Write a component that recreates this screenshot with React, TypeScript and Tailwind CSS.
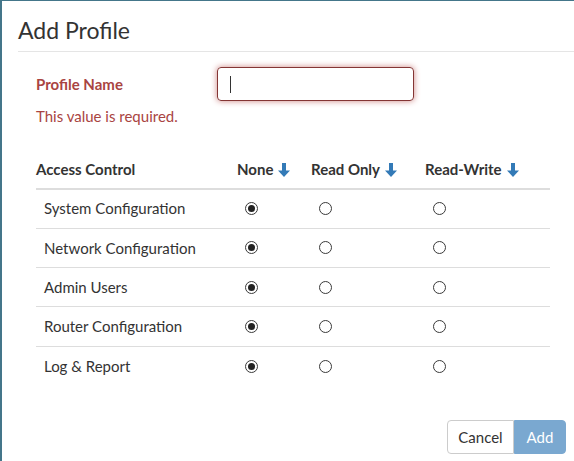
import React from "react";

const rows = [
  "System Configuration",
  "Network Configuration",
  "Admin Users",
  "Router Configuration",
  "Log & Report",
];

function Arrow() {
  return (
    <svg width="12" height="14" viewBox="0 0 12 14" className="ml-[5px] inline-block">
      <path d="M4 0h4v7.5h4L6 14 0 7.5h4z" fill="#337ab7" />
    </svg>
  );
}

function Radio({ checked }: { checked?: boolean }) {
  return (
    <span className="w-[13px] h-[13px] rounded-full border border-[#3a3a3a] bg-white flex items-center justify-center">
      {checked && <span className="w-[7px] h-[7px] rounded-full bg-[#222]" />}
    </span>
  );
}

export default function App() {
  return (
    <div
      className="w-[574px] h-[461px] border-l-2 border-t border-[#44768a] bg-white text-[#333] overflow-hidden"
      style={{ fontFamily: "Lato, 'Open Sans', sans-serif" }}
    >
      <div className="ml-[16px] border-b border-[#e5e5e5] h-[51px] flex items-center">
        <h1 className="text-[23px] leading-none pt-[9px]">Add Profile</h1>
      </div>
      <div className="pl-[34px] pt-[15px]">
        <div className="flex items-center h-[34px]">
          <div className="w-[181px] text-[15px] font-bold text-[#a94442] pt-[1px]">Profile Name</div>
          <div className="w-[197px] h-[34px] rounded-[4px] border border-[#843534] shadow-[0_0_6px_#ce8483] flex items-center pl-[12px]">
            <span className="w-px h-[17px] bg-[#333]" />
          </div>
        </div>
        <div className="text-[15px] text-[#a94442] mt-[5px] leading-[20px]">This value is required.</div>
        <div className="w-[514px] mt-[25.5px] text-[15px]">
          <div className="flex h-[38px] items-center border-b-2 border-[#ddd] font-bold">
            <div className="w-[193px]">Access Control</div>
            <div className="w-[74px] pl-[8px] flex items-center">None<Arrow /></div>
            <div className="w-[114px] pl-[8px] flex items-center">Read Only<Arrow /></div>
            <div className="flex-1 pl-[8px] flex items-center">Read-Write<Arrow /></div>
          </div>
          {rows.map((r, i) => (
            <div
              key={r}
              className={`flex h-[39.25px] items-center ${i < rows.length - 1 ? "border-b border-[#ddd]" : ""}`}
            >
              <div className="w-[193px] pl-[8px]">{r}</div>
              <div className="w-[74px] pl-[16px]"><Radio checked /></div>
              <div className="w-[114px] pl-[16px]"><Radio /></div>
              <div className="flex-1 pl-[16px]"><Radio /></div>
            </div>
          ))}
        </div>
        <div className="flex justify-end w-[530px] mt-[34px]">
          <button className="h-[34px] w-[67px] text-[15px] border border-[#ccc] rounded-l-[4px] bg-white text-[#333]">Cancel</button>
          <button className="h-[34px] w-[52px] text-[15px] rounded-r-[4px] bg-[#7aa8d0] text-white border border-[#7aa8d0]">Add</button>
        </div>
      </div>
    </div>
  );
}
